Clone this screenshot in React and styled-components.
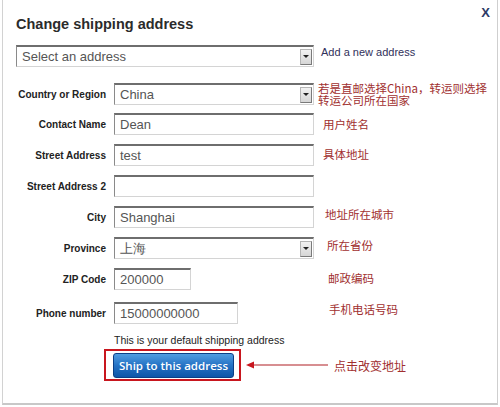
import React from "react";
import styled, { createGlobalStyle } from "styled-components";

const GlobalStyle = createGlobalStyle`
  body {
    margin: 0;
    background: #fff;
    font-family: "Liberation Sans", Arial, sans-serif;
  }
`;

const Dialog = styled.div`
  width: 496px;
  height: 405px;
  margin-left: 2px;
  box-sizing: border-box;
  border-left: 1px solid #d2d2d2;
  border-right: 1px solid #cfcfcf;
  border-bottom: 2px solid #c8c8c8;
  background: #fff;
  padding: 10px 7px 0 13px;
`;

const Header = styled.div`
  display: flex;
  justify-content: space-between;
  align-items: flex-start;
`;

const Title = styled.h1`
  margin: 2px 0 0;
  font-family: "Liberation Sans", Arial, sans-serif;
  font-size: 14.5px;
  font-weight: 700;
  line-height: 24px;
  color: #2b2b2b;
`;

const Close = styled.span`
  font-family: "Liberation Sans", Arial, sans-serif;
  font-size: 13px;
  font-weight: 700;
  line-height: 14px;
  color: #2c3a66;
  margin-top: -4px;
  cursor: pointer;
`;

const AddressRow = styled.div`
  display: flex;
  align-items: flex-start;
  gap: 7px;
  margin-top: 9px;
`;

const Field = styled.div`
  box-sizing: border-box;
  width: ${(p) => p.$w || 200}px;
  height: 22px;
  display: flex;
  align-items: center;
  justify-content: space-between;
  padding: 0 1px 0 5px;
  border: 1px solid #d4d4d4;
  border-top: 2px solid #6e6e6e;
  border-left: 1px solid #8a8a8a;
  background: #fff;
  font-size: 13px;
  color: #555;
  white-space: nowrap;
`;

const DropButton = styled.span`
  box-sizing: border-box;
  width: 12px;
  height: 16px;
  display: flex;
  align-items: center;
  justify-content: center;
  background: linear-gradient(#f2f2f2, #d6d6d6);
  border: 1px solid #b5b5b5;
  border-right-color: #7a7a7a;
  border-bottom-color: #7a7a7a;
  &::after {
    content: "";
    border-left: 3px solid transparent;
    border-right: 3px solid transparent;
    border-top: 3px solid #222;
  }
`;

const Link = styled.a`
  font-size: 11px;
  color: #30305a;
  padding-top: 1px;
  text-decoration: none;
  cursor: pointer;
`;

const Form = styled.div`
  margin-top: 15px;
`;

const Row = styled.div`
  display: grid;
  grid-template-columns: 98px 204px 1fr;
  align-items: center;
  height: 22px;
  margin-top: ${(p) => (p.$first ? 0 : p.$gap || 9)}px;
`;

const Label = styled.label`
  text-align: right;
  padding-right: 8px;
  font-size: 10px;
  font-weight: 700;
  color: #222;
  white-space: nowrap;
`;

const Note = styled.div`
  font-family: "Noto Sans CJK SC", "Liberation Sans", sans-serif;
  font-size: 11.5px;
  line-height: 12px;
  color: #a13030;
  padding-left: ${(p) => p.$x || 0}px;
  margin-bottom: ${(p) => p.$lift || 0}px;
  white-space: nowrap;
`;

const Hint = styled.div`
  margin: 10px 0 0 98px;
  font-size: 10.5px;
  color: #222;
`;

const ActionRow = styled.div`
  display: flex;
  align-items: center;
  margin: 3px 0 0 88px;
`;

const Frame = styled.div`
  box-sizing: border-box;
  display: flex;
  align-items: center;
  padding: 2px 5px 1px 7px;
  border: 2px solid #c8161e;
`;

const ShipButton = styled.button`
  width: 121px;
  height: 25px;
  border: 1px solid #0b3f86;
  border-radius: 3px;
  background: linear-gradient(#4f9de0 0%, #2572c4 50%, #0d56a8 100%);
  color: #fff;
  font-family: "Open Sans", "Liberation Sans", sans-serif;
  font-size: 11.5px;
  font-weight: 600;
  cursor: pointer;
  padding: 0;
`;

const Pointer = styled.svg`
  display: block;
  margin-left: 5px;
`;

const ActionNote = styled.span`
  font-family: "Noto Sans CJK SC", "Liberation Sans", sans-serif;
  font-size: 12px;
  color: #a13030;
  margin-left: 6px;
`;

const SelectField = ({ value, width }) => (
  <Field $w={width}>
    <span>{value}</span>
    <DropButton />
  </Field>
);

const rows = [
  { label: "Country or Region", value: "China", select: true, note: ["若是直邮选择China，转运则选择", "转运公司所在国家"], x: 0 },
  { label: "Contact Name", value: "Dean", note: ["用户姓名"], x: 5 },
  { label: "Street Address", value: "test", note: ["具体地址"], x: 5, lift: 3 },
  { label: "Street Address 2", value: "" },
  { label: "City", value: "Shanghai", note: ["地址所在城市"], x: 7, lift: 6 },
  { label: "Province", value: "上海", select: true, note: ["所在省份"], x: 9, lift: 6 },
  { label: "ZIP Code", value: "200000", width: 77, note: ["邮政编码"], x: 10, lift: 3 },
  { label: "Phone number", value: "15000000000", width: 124, note: ["手机电话号码"], x: 11, lift: 8, gap: 12 },
];

export default function App() {
  return (
    <>
      <GlobalStyle />
      <Dialog>
        <Header>
          <Title>Change shipping address</Title>
          <Close>X</Close>
        </Header>

        <AddressRow>
          <SelectField value="Select an address" width={298} />
          <Link>Add a new address</Link>
        </AddressRow>

        <Form>
          {rows.map((row, index) => (
            <Row key={row.label} $first={index === 0} $gap={row.gap}>
              <Label>{row.label}</Label>
              {row.select ? (
                <SelectField value={row.value} width={200} />
              ) : (
                <Field $w={row.width}>{row.value}</Field>
              )}
              {row.note && (
                <Note $x={row.x} $lift={row.lift}>
                  {row.note.map((line) => (
                    <div key={line}>{line}</div>
                  ))}
                </Note>
              )}
            </Row>
          ))}
        </Form>

        <Hint>This is your default shipping address</Hint>

        <ActionRow>
          <Frame>
            <ShipButton>Ship to this address</ShipButton>
          </Frame>
          <Pointer width="82" height="10" viewBox="0 0 82 10">
            <line x1="6" y1="5" x2="82" y2="5" stroke="#b01e24" strokeWidth="1.2" />
            <polygon points="0,5 8,1.5 8,8.5" fill="#c8161e" />
          </Pointer>
          <ActionNote>点击改变地址</ActionNote>
        </ActionRow>
      </Dialog>
    </>
  );
}
